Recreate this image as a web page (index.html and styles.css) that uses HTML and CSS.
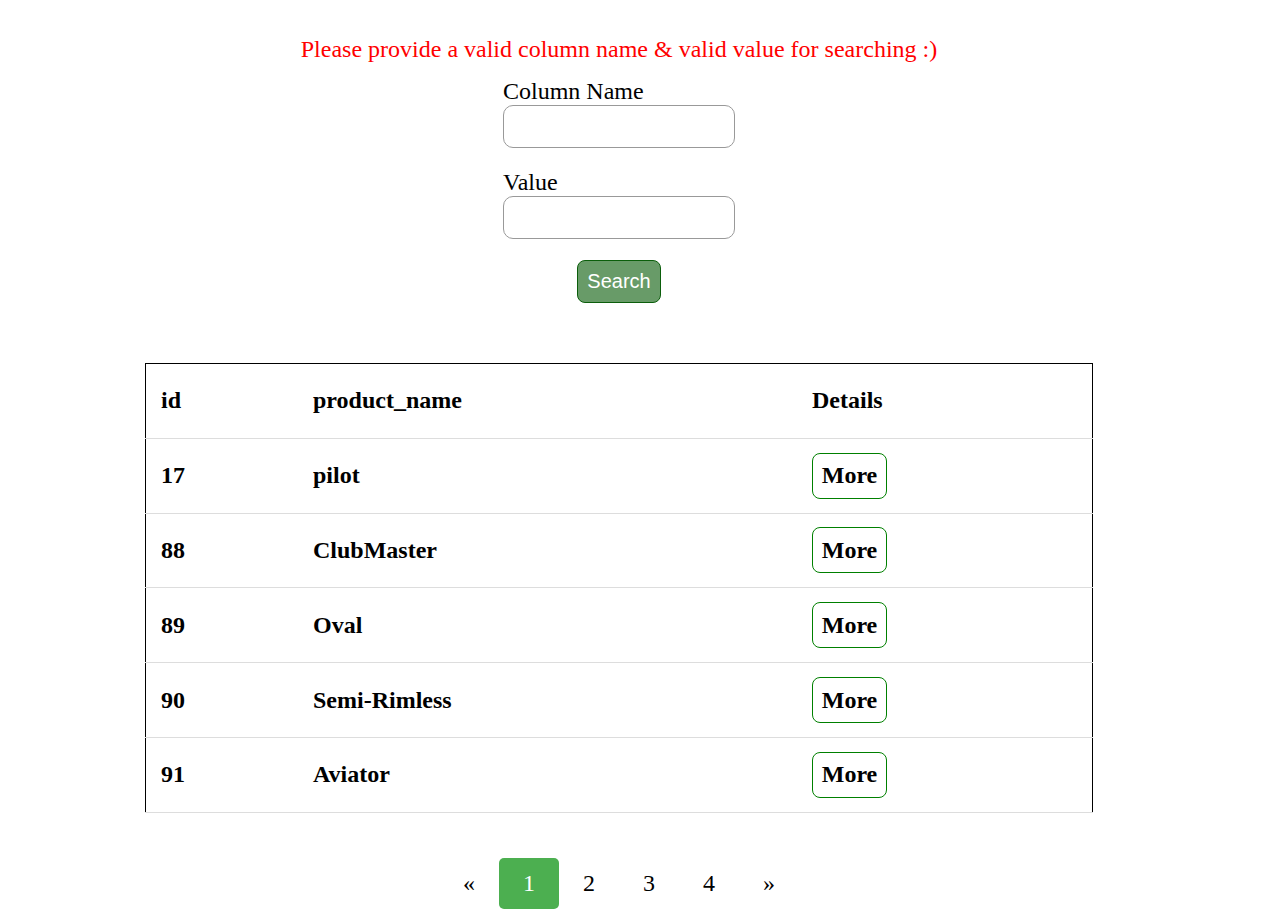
FILE: index.html
```html
<!DOCTYPE html>
<html lang="en">
<head>
<meta charset="utf-8">
<title>Products</title>
<link rel="stylesheet" href="styles.css">
</head>
<body>
<main class="page">
  <p class="notice">Please provide a valid column name &amp; valid value for searching :)</p>
  <form class="search-form">
    <div class="field">
      <label class="field-label" for="col">Column Name</label>
      <input class="field-input" id="col" type="text">
    </div>
    <div class="field field-second">
      <label class="field-label" for="val">Value</label>
      <input class="field-input" id="val" type="text">
    </div>
    <button class="search-btn" type="button">Search</button>
  </form>

  <table class="products">
    <thead>
      <tr><th class="col-id">id</th><th class="col-name">product_name</th><th>Details</th></tr>
    </thead>
    <tbody>
      <tr><td>17</td><td>pilot</td><td><button class="more-btn" type="button">More</button></td></tr>
      <tr><td>88</td><td>ClubMaster</td><td><button class="more-btn" type="button">More</button></td></tr>
      <tr><td>89</td><td>Oval</td><td><button class="more-btn" type="button">More</button></td></tr>
      <tr><td>90</td><td>Semi-Rimless</td><td><button class="more-btn" type="button">More</button></td></tr>
      <tr><td>91</td><td>Aviator</td><td><button class="more-btn" type="button">More</button></td></tr>
    </tbody>
  </table>

  <nav class="pagination">
    <a href="#">&laquo;</a>
    <a href="#" class="active">1</a>
    <a href="#">2</a>
    <a href="#">3</a>
    <a href="#">4</a>
    <a href="#">&raquo;</a>
  </nav>
</main>
</body>
</html>
```

FILE: styles.css
```css
html, body {
  margin: 0;
  padding: 0;
  background: #fff;
}
body {
  padding: 0 8px;
  font-family: "Liberation Serif", "Times New Roman", serif;
  color: #000;
}
.page {
  width: 1222px;
  display: flex;
  flex-direction: column;
  align-items: center;
}
.notice {
  margin: 36px 0 0;
  font-size: 24px;
  line-height: 27px;
  color: #ff0000;
}
.search-form {
  margin-top: 15px;
  display: flex;
  flex-direction: column;
  align-items: center;
}
.field {
  display: flex;
  flex-direction: column;
}
.field-second {
  margin-top: 21px;
}
.field-label {
  font-size: 24px;
  line-height: 27px;
}
.field-input {
  box-sizing: border-box;
  width: 232px;
  height: 43px;
  margin: 0;
  padding: 0 10px;
  border: 1px solid #999;
  border-radius: 10px;
  font-size: 18px;
  background: #fff;
}
.search-btn {
  margin-top: 21px;
  box-sizing: border-box;
  height: 43px;
  padding: 0 9px;
  background: #689b68;
  border: 1px solid #0b5e0b;
  border-radius: 8px;
  color: #fff;
  font-family: "Liberation Sans", Arial, sans-serif;
  font-size: 20px;
}
.products {
  margin-top: 60px;
  width: 948px;
  border-collapse: collapse;
  table-layout: fixed;
  border: 1px solid #000;
}
.products th,
.products td {
  height: 73.8px;
  padding: 0 15px;
  text-align: left;
  vertical-align: middle;
  font-size: 24px;
  font-weight: bold;
  border-bottom: 1px solid #ddd;
}
.col-id { width: 122px; }
.col-name { width: 469px; }
.more-btn {
  box-sizing: border-box;
  width: 75px;
  height: 46px;
  padding: 0;
  background: #fff;
  border: 1px solid #008000;
  border-radius: 8px;
  font-family: "Liberation Serif", "Times New Roman", serif;
  font-size: 24px;
  font-weight: bold;
  color: #000;
}
.pagination {
  margin-top: 45px;
  display: flex;
}
.pagination a {
  display: block;
  width: 60px;
  padding: 12px 0;
  text-align: center;
  font-size: 24px;
  line-height: 27px;
  color: #000;
  text-decoration: none;
  border-radius: 5px;
}
.pagination a.active {
  background: #4caf50;
  color: #fff;
}
```
